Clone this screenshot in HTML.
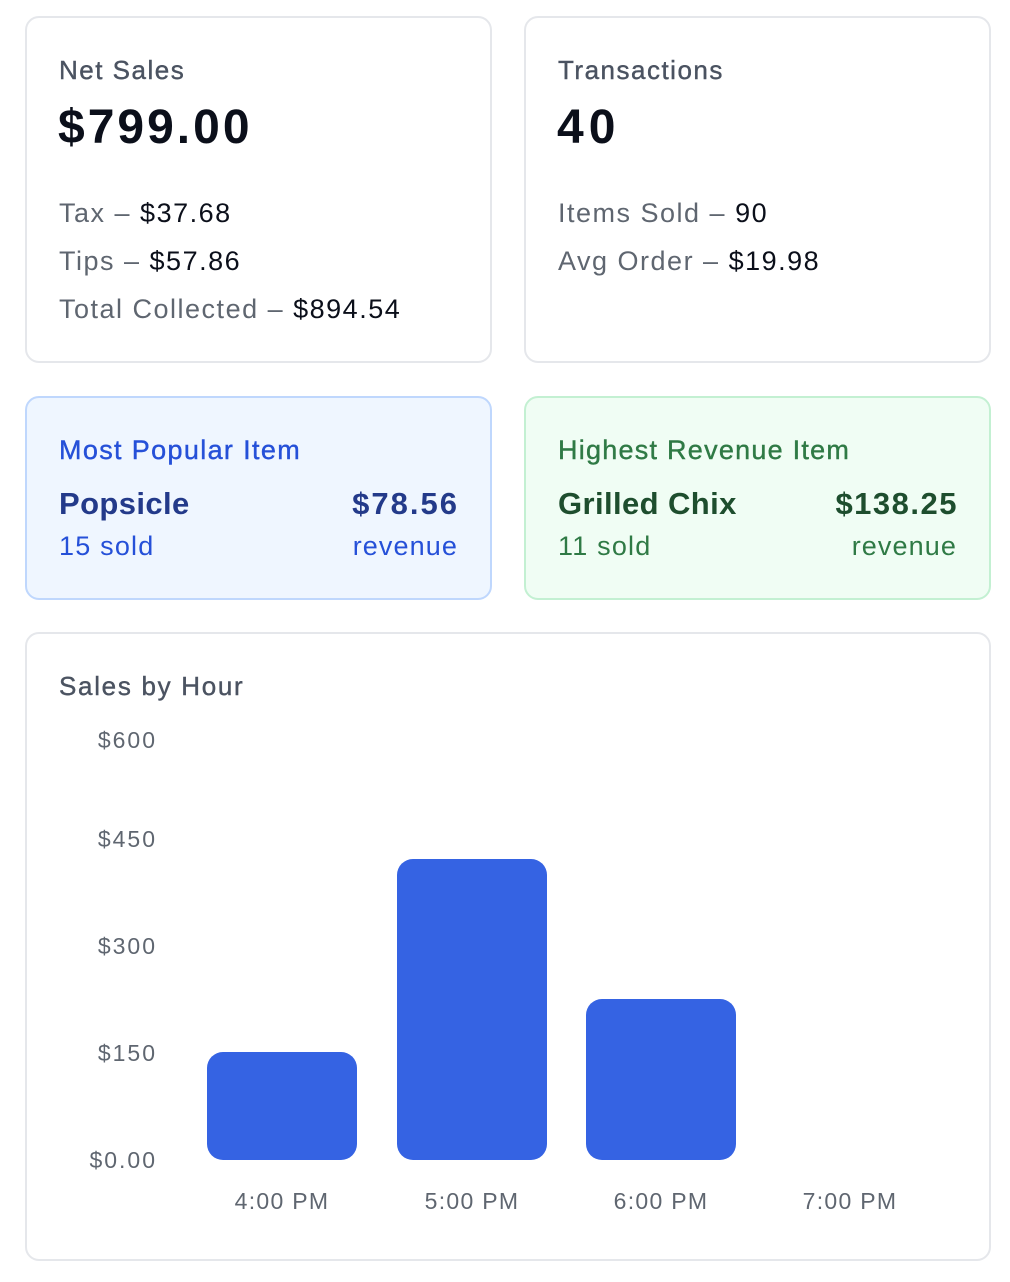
<!DOCTYPE html>
<html><head><meta charset="utf-8"><style>
*{margin:0;padding:0;box-sizing:border-box}
body{width:1010px;height:1282px;background:#fff;font-family:"Liberation Sans",sans-serif;position:relative;overflow:hidden}
.card{position:absolute;border:2px solid #e5e7eb;border-radius:14px;background:#fff}
.t{position:absolute;white-space:nowrap;line-height:1}
.g{color:#5f6670}
.k{color:#0b0f1a}
.m{-webkit-text-stroke:0.4px currentColor}
.bar{position:absolute;background:#3563e3;border-radius:16px}
.yl{position:absolute;right:853px;font-size:23px;color:#5f6670;line-height:1;white-space:nowrap;letter-spacing:2px}
.xl{position:absolute;width:150px;text-align:center;font-size:23px;color:#5f6670;line-height:1;top:1190px;letter-spacing:1.3px}
</style></head><body>

<div class="card" style="left:25px;top:16px;width:467px;height:347px"></div>
<div class="t m" style="left:59px;top:57px;font-size:26px;color:#4b5361;letter-spacing:1.5px">Net Sales</div>
<div class="t k" style="left:58px;top:104px;font-size:48px;font-weight:700;letter-spacing:3px">$799.00</div>
<div class="t" style="left:59px;top:200px;font-size:27px;letter-spacing:1.5px"><span class="g">Tax – </span><span class="k">$37.68</span></div>
<div class="t" style="left:59px;top:248px;font-size:27px;letter-spacing:1.5px"><span class="g">Tips – </span><span class="k">$57.86</span></div>
<div class="t" style="left:59px;top:296px;font-size:27px;letter-spacing:1.5px"><span class="g">Total Collected – </span><span class="k">$894.54</span></div>

<div class="card" style="left:524px;top:16px;width:467px;height:347px"></div>
<div class="t m" style="left:558px;top:57px;font-size:26px;color:#4b5361;letter-spacing:1.5px">Transactions</div>
<div class="t k" style="left:557px;top:104px;font-size:48px;font-weight:700;letter-spacing:5px">40</div>
<div class="t" style="left:558px;top:200px;font-size:27px;letter-spacing:1.5px"><span class="g">Items Sold – </span><span class="k">90</span></div>
<div class="t" style="left:558px;top:248px;font-size:27px;letter-spacing:1.5px"><span class="g">Avg Order – </span><span class="k">$19.98</span></div>

<div class="card" style="left:25px;top:396px;width:467px;height:204px;background:#eff6ff;border-color:#bfd7fd"></div>
<div class="t m" style="left:59px;top:437px;font-size:27px;color:#2550d8;letter-spacing:1.35px">Most Popular Item</div>
<div class="t" style="left:59px;top:488px;font-size:31px;font-weight:700;color:#233a8a;letter-spacing:0.4px">Popsicle</div>
<div class="t" style="right:551px;top:488px;font-size:31px;font-weight:700;color:#233a8a;letter-spacing:2px">$78.56</div>
<div class="t" style="left:59px;top:533px;font-size:27px;color:#2550d8;letter-spacing:1.2px">15 sold</div>
<div class="t" style="right:552px;top:533px;font-size:27px;color:#2550d8;letter-spacing:1.1px">revenue</div>

<div class="card" style="left:524px;top:396px;width:467px;height:204px;background:#f0fdf4;border-color:#c3f0d2"></div>
<div class="t m" style="left:558px;top:437px;font-size:27px;color:#2f7a45;letter-spacing:1.25px">Highest Revenue Item</div>
<div class="t" style="left:558px;top:488px;font-size:31px;font-weight:700;color:#1e4e2e;letter-spacing:0.4px">Grilled Chix</div>
<div class="t" style="right:52px;top:488px;font-size:31px;font-weight:700;color:#1e4e2e;letter-spacing:1.5px">$138.25</div>
<div class="t" style="left:558px;top:533px;font-size:27px;color:#2f7a45;letter-spacing:1.2px">11 sold</div>
<div class="t" style="right:53px;top:533px;font-size:27px;color:#2f7a45;letter-spacing:1.1px">revenue</div>

<div class="card" style="left:25px;top:632px;width:966px;height:629px"></div>
<div class="t m" style="left:59px;top:673px;font-size:26px;color:#4b5361;letter-spacing:1.7px">Sales by Hour</div>

<div class="yl" style="top:729px">$600</div>
<div class="yl" style="top:828px">$450</div>
<div class="yl" style="top:935px">$300</div>
<div class="yl" style="top:1042px">$150</div>
<div class="yl" style="top:1149px">$0.00</div>

<div class="bar" style="left:207px;top:1052px;width:150px;height:108px"></div>
<div class="bar" style="left:397px;top:859px;width:150px;height:301px"></div>
<div class="bar" style="left:586px;top:999px;width:150px;height:161px"></div>

<div class="xl" style="left:207px">4:00 PM</div>
<div class="xl" style="left:397px">5:00 PM</div>
<div class="xl" style="left:586px">6:00 PM</div>
<div class="xl" style="left:775px">7:00 PM</div>
</body></html>
